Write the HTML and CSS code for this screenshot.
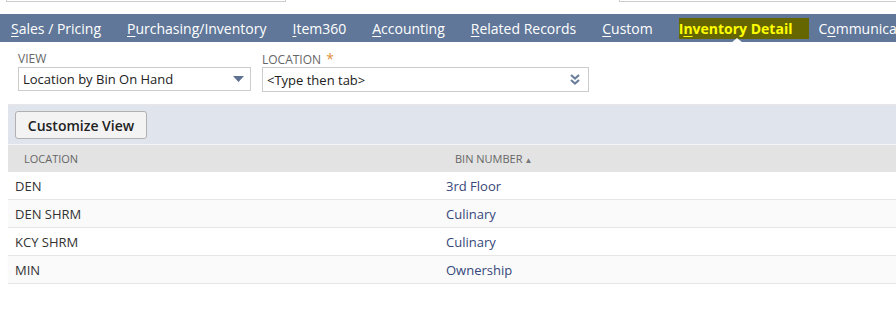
FILE: index.html
```html
<!DOCTYPE html>
<html lang="en">
<head>
  <meta charset="UTF-8" />
  <title>Inventory Detail</title>
  <link rel="stylesheet" href="styles.css">
</head>
<body>
  <div class="topbar">
    <div class="top-field left"></div>
    <div class="top-field right"></div>
  </div>

  <div class="tabs">
    <a class="tab"><u>S</u>ales / Pricing</a>
    <a class="tab"><u>P</u>urchasing/Inventory</a>
    <a class="tab"><u>I</u>tem360</a>
    <a class="tab"><u>A</u>ccounting</a>
    <a class="tab"><u>R</u>elated Records</a>
    <a class="tab"><u>C</u>ustom</a>
    <a class="tab active"><span class="hl">I<u>n</u>ventory Detail</span></a>
    <a class="tab">C<u>o</u>mmunication</a>
  </div>

  <div class="filters">
    <div class="field">
      <label>VIEW</label>
      <div class="select view-select">
        <span>Location by Bin On Hand</span>
        <svg width="11" height="6" viewBox="0 0 11 6"><path d="M0 0h11L5.5 6z" fill="#5e7190"/></svg>
      </div>
    </div>
    <div class="field">
      <label>LOCATION <span class="req">*</span></label>
      <div class="select loc-select">
        <span>&lt;Type then tab&gt;</span>
        <svg width="10" height="11" viewBox="0 0 10 11"><path d="M1 1l4 3.5L9 1M1 6l4 3.5L9 6" fill="none" stroke="#6b7f9c" stroke-width="2.2"/></svg>
      </div>
    </div>
  </div>

  <div class="list">
    <div class="toolbar">
      <button class="btn">Customize View</button>
    </div>
    <div class="row head">
      <div class="col1">LOCATION</div>
      <div class="col2">BIN NUMBER<span class="sort">&#9650;</span></div>
    </div>
    <div class="row">
      <div class="col1">DEN</div>
      <div class="col2 bin">3rd Floor</div>
    </div>
    <div class="row">
      <div class="col1">DEN SHRM</div>
      <div class="col2 bin">Culinary</div>
    </div>
    <div class="row">
      <div class="col1">KCY SHRM</div>
      <div class="col2 bin">Culinary</div>
    </div>
    <div class="row">
      <div class="col1">MIN</div>
      <div class="col2 bin">Ownership</div>
    </div>
  </div>
</body>
</html>
```

FILE: styles.css
```css
html, body {
  margin: 0;
  padding: 0;
  background: #fff;
  font-family: 'Open Sans', Arial, sans-serif;
  color: #333;
  overflow: hidden;
}

.topbar {
  height: 14px;
  display: flex;
  justify-content: space-between;
}

.top-field {
  height: 1px;
  border: 1px solid #cccccc;
  border-top: none;
}

.top-field.left {
  margin-left: 6px;
  width: 278px;
}

.top-field.right {
  width: 276px;
  border-right: none;
}

.tabs {
  height: 28px;
  background: #607799;
  display: flex;
  align-items: center;
  gap: 26px;
  padding-left: 11px;
  white-space: nowrap;
  overflow: hidden;
}

.tab {
  flex-shrink: 0;
  color: #fff;
  font-size: 14px;
  position: relative;
  line-height: 28px;
  padding-top: 1px;
}

.tab u {
  text-decoration-thickness: 1px;
  text-underline-offset: 2px;
}

.tab.active {
  font-weight: 700;
  color: #ffff00;
  margin-right: -17px;
}

.tab.active .hl {
  background: #666600;
  padding: 1px 17px 1px 0;
}

.tab.active::after {
  content: "";
  position: absolute;
  left: 52px;
  bottom: 0;
  border-left: 6px solid transparent;
  border-right: 6px solid transparent;
  border-bottom: 5px solid #fff;
}

.filters {
  display: flex;
  gap: 11px;
  margin-left: 8px;
  padding: 9px 0 12px 10px;
  border-bottom: 1px solid #e6e6ea;
}

.field label {
  display: block;
  font-size: 12px;
  color: #666;
  height: 16px;
  line-height: 16px;
}

.req {
  color: #e0903a;
  font-size: 14px;
  margin-left: 2px;
}

.select {
  box-sizing: border-box;
  height: 24px;
  border: 1px solid #cccccc;
  display: flex;
  align-items: center;
  justify-content: space-between;
  padding: 0 6px 0 4px;
  font-size: 13px;
  color: #222;
}

.view-select {
  width: 233px;
}

.loc-select {
  width: 327px;
  height: 25px;
  padding-right: 8px;
}

.list {
  margin-left: 8px;
}

.toolbar {
  background: #e0e5ed;
  padding: 6px 7px 5px;
  border-bottom: 1px solid #f4f5f8;
}

.btn {
  display: block;
  font-family: 'Open Sans', Arial, sans-serif;
  font-size: 14px;
  font-weight: 600;
  color: #222;
  background: #f3f3f3;
  border: 1px solid #b0b0b0;
  border-radius: 3px;
  height: 28px;
  width: 132px;
  padding: 0;
}

.row {
  display: flex;
  height: 27px;
  align-items: center;
  font-size: 13px;
  background: #fafafa;
  border-bottom: 1px solid #e6e6e6;
}

.row:nth-child(odd) {
  background: #fff;
}

.row.head {
  background: #e3e3e3;
  font-size: 11px;
  color: #666;
  border-bottom: none;
}

.col1 {
  width: 431px;
  box-sizing: border-box;
  padding-left: 7px;
}

.col2 {
  padding-left: 7px;
}

.head .col1, .head .col2 {
  padding-left: 16px;
}

.bin {
  color: #36477a;
}

.sort {
  font-size: 8px;
  color: #777;
  margin-left: 2px;
}

.list .row:last-child {
  box-shadow: 0 1px 1px rgba(0,0,0,0.06);
}
```
